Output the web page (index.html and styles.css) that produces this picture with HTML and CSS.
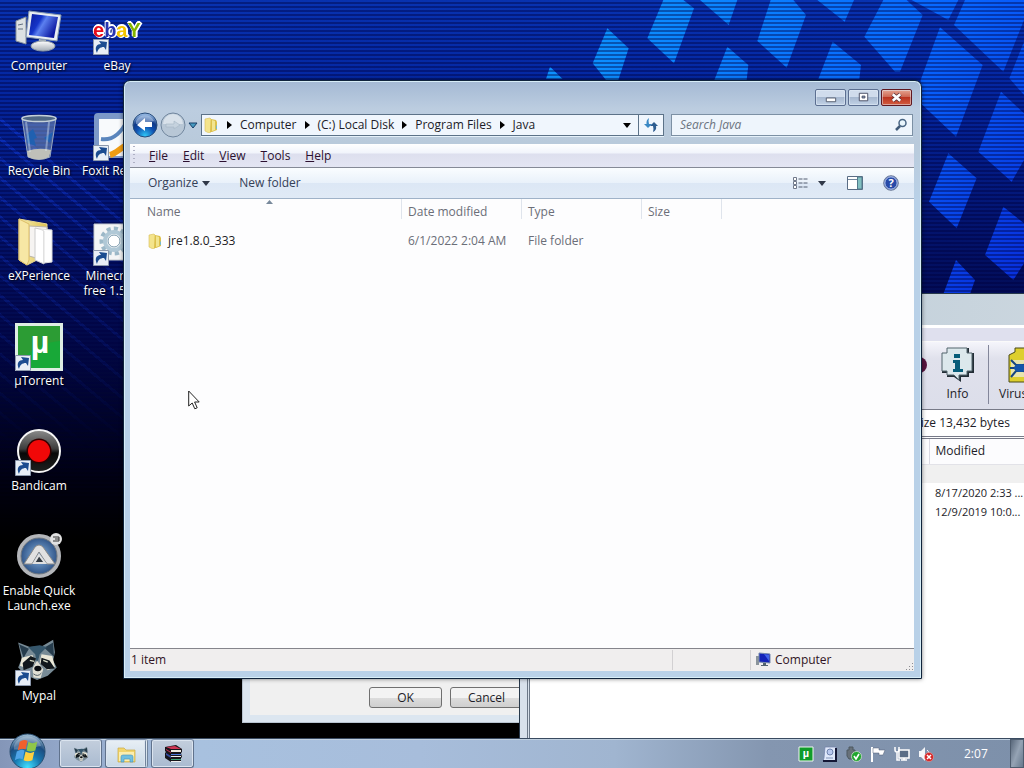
FILE: index.html
```html
<!DOCTYPE html>
<html lang="en">
<head>
<meta charset="utf-8">
<meta name="viewport" content="width=device-width, initial-scale=1">
<title>Java</title>
<link rel="stylesheet" href="styles.css">
</head>
<body>
<svg class="defs" width="0" height="0" aria-hidden="true">
  <defs>
    <linearGradient id="screen" x1="0" y1="0" x2="1" y2=".5"><stop offset="0" stop-color="#0c1c98"/><stop offset=".4" stop-color="#1434c8"/><stop offset=".55" stop-color="#5c80f0"/><stop offset="1" stop-color="#0c18a0"/></linearGradient>
    <linearGradient id="gold" x1="0" x2="1"><stop offset="0" stop-color="#f8efb0"/><stop offset="1" stop-color="#dcc050"/></linearGradient>
    <linearGradient id="silver" x1="0" y1="0" x2="0" y2="1"><stop offset="0" stop-color="#fff"/><stop offset="1" stop-color="#a4adb6"/></linearGradient>
    <linearGradient id="ring" x1="0" y1="0" x2="0" y2="1"><stop offset="0" stop-color="#8c8c8c"/><stop offset=".45" stop-color="#3c3c3c"/><stop offset=".55" stop-color="#080808"/><stop offset="1" stop-color="#202020"/></linearGradient>
    <radialGradient id="autoblue"><stop offset="0" stop-color="#88b4e0"/><stop offset="1" stop-color="#284c80"/></radialGradient>
    <radialGradient id="navblue" cx=".5" cy=".95" r=".9"><stop offset="0" stop-color="#30c8f8"/><stop offset=".45" stop-color="#1050b0"/><stop offset=".7" stop-color="#103a88"/><stop offset="1" stop-color="#90b4e0"/></radialGradient>
    <radialGradient id="orb" cx=".5" cy=".95" r=".95"><stop offset="0" stop-color="#40e0ff"/><stop offset=".4" stop-color="#1878b0"/><stop offset=".7" stop-color="#1c4c80"/><stop offset="1" stop-color="#a8c4d8"/></radialGradient>
    <symbol id="shortcut" viewBox="0 0 16 16"><path d="M.5.5h15v15H.5z" fill="#e8eef6" stroke="#8c98ac"/><path d="M4 14C1 8 4 5 8 5L6 2l8 1-1 8-2-3c-4 0-6 2-7 6z" fill="#1c4c90"/></symbol>
    <symbol id="folder" viewBox="0 0 16 16"><path d="M2 2l5-1 1 1v13l-2 1-4-2z" fill="#f4e48c" stroke="#d8bd58" stroke-width=".6"/><path d="M8 2l5 1 1 2v8l-5 2H7z" fill="#dcc04c"/><path d="M9 3l3 1v9l-3 1z" fill="#f2e590"/><path d="M13 8l1 1v3h-1z" fill="#78bac8"/></symbol>
    <symbol id="raccoon" viewBox="0 0 48 48"><path d="M3 5l13 5 14-1L42 2l2 14-2 9 4 8-10 9-12 5-13-6L3 33l4-10z" fill="#788b96"/><path d="M4 7l11 5-6 10zM42 5l1 16-11-10z" fill="#263c4c"/><path d="M14 10l8 8 2 12 3-12 8-8-8-2z" fill="#35566b"/><path d="M7 22l12-3 3 9-9 6-8-3zM29 18l12 2 3 12-8 4-9-8z" fill="#ebe8d8"/><path d="M8 28l9-8 6 3-4 9-10 4zM29 22l9 3 6 9-9 1-7-6z" fill="#11171c"/><path d="M16 25l5 1M31 25l5 2" stroke="#d8dcc8" stroke-width="1.5"/><path d="M19 34l5-9 7 10-3 10-8-1z" fill="#e0dfd4"/><ellipse cx="25" cy="34" rx="4" ry="3" fill="#080c10"/><path d="M20 40q5 4 9-1" stroke="#42505a" fill="none"/></symbol>
  </defs>
</svg>
<main class="desktop">
  <svg class="wallpaper" viewBox="0 0 1572 900" aria-hidden="true">
    <defs>
      <linearGradient id="tiles" gradientUnits="userSpaceOnUse" x1="400" y1="0" x2="1500" y2="900"><stop offset="0" stop-color="#0c90ff"/><stop offset=".55" stop-color="#0764ff"/><stop offset="1" stop-color="#0830dc"/></linearGradient>
    </defs>
    <g fill="url(#tiles)">
      <path d="M150 200l38 37h-50zM322 85l64 60-31 95h-37l-40-50zM490 0h60l32 25-60 165-80-75zM600 0h112l-26 75zM812 0h68l38 45-58 158-88-80zM682 140l63 55-5 45h-97zM952 0h110l-28 65zM1150 0h70l48 45-68 170h-15l-92-105zM998 125l85 70-5 42H955zM1235 0h140l-30 60z"/>
      <path d="M1395 0h177v60l-62 155-148-140zM1320 82l128 113-80 215-106-100v-70zM1572 125v160l-44-50zM1503 275l69 65v140l-37 65-100-90zM1345 460l85 75-60 150-83-80zM1510 620l62 50v120l-32 50-85-75zM1368 780l57 60-15 42h-80z"/>
    </g>
  </svg>
  <div class="weave"></div>
  <div class="scanlines"></div>

  <nav class="icons" aria-label="Desktop">
    <div class="icon-column">
      <a class="icon" href="#computer"><svg viewBox="0 0 48 48"><path d="M1 13l10-4v27l-10-3z" fill="#dce1e3" stroke="#88939b"/><path d="M3 17l5-1M3 21h5" stroke="#627080"/><path d="M14 3l32 4-4 26-31-4z" fill="#e9eef3" stroke="#899bb1"/><path d="M17 6l26 3-4 21-25-3z" fill="url(#screen)"/><path d="M24 31l7 1 1 6h-9z" fill="#aeb8be"/><ellipse cx="28" cy="38" rx="12" ry="5" fill="url(#silver)" stroke="#929fa9"/></svg><span>Computer</span></a>
      <a class="icon" href="#recycle"><svg viewBox="0 0 48 48"><path d="M7 5h34l-6 39q-11 5-22 0z" fill="#7c98c0" fill-opacity=".55" stroke="#98a8c0"/><path d="M12 38l1 6q11 5 21 0l2-7q-12-3-24 1z" fill="#bfc0b9"/><ellipse cx="24" cy="5.500" rx="17" ry="3" fill="#506884" stroke="#c4d0d8" stroke-width="1.500"/><path d="M12 21l6-5 4 9-3 1 2 7-9-3M29 25l9-6-3 11z" fill="#2060b0"/><path d="M11 9l4 30M34 9l-3 29" stroke="#e0edf5" opacity=".4" stroke-width="2"/></svg><span>Recycle Bin</span></a>
      <a class="icon" href="#experience"><svg viewBox="0 0 48 48"><path d="M4 1l28 5v31L12 47l-8-5z" fill="url(#gold)" stroke="#ead890"/><path d="M14 8l18 1v34l-18-5z" fill="#f6f4f2" stroke="#bbb5a8"/><path d="M20 10l9 2v34l-9-4z" fill="#fff" stroke="#ccc"/><path d="M25 11l12 1v32l-8 1V13z" fill="#fefefe" stroke="#ddd"/><path d="M4 1l10 5v36l-2 5-8-5z" fill="#f7e7a5" stroke="#ddbd68"/></svg><span>eXPerience</span></a>
      <a class="icon" href="#utorrent"><svg viewBox="0 0 48 48"><path d="M0 0h48v48H0z" fill="#dfeee4"/><path d="M3 3h42v42H3z" fill="#18a838"/><path d="M3 3h42v15C22 20 8 32 3 45z" fill="#2c9c34"/><text x="25" y="30" text-anchor="middle" class="mu">µ</text><use href="#shortcut" y="32" width="16" height="16"/></svg><span>µTorrent</span></a>
      <a class="icon" href="#bandicam"><svg viewBox="0 0 48 48"><circle cx="24" cy="23" r="21" fill="url(#ring)" stroke="#f5f5f5" stroke-width="2"/><circle cx="24" cy="23" r="12.500" fill="#300"/><circle cx="24" cy="23" r="11" fill="#f10808"/><use href="#shortcut" y="32" width="16" height="16"/></svg><span>Bandicam</span></a>
      <a class="icon" href="#quicklaunch"><svg viewBox="0 0 48 48"><circle cx="24" cy="23" r="20" fill="url(#autoblue)" stroke="#b4b6ba" stroke-width="4"/><circle cx="24" cy="23" r="18" fill="none" stroke="#707880"/><path d="M9 31l11-17q4-4 8 0l12 17h-8l-8-12-7 12z" fill="#e1e1e1" stroke="#888"/><path d="M19 30l5-8 6 8z" fill="#303840" stroke="#e1e1e1" stroke-width="2"/><circle cx="41" cy="6" r="6" fill="#e2e2e2"/><path d="M38 4h6v4h-6M40 6h4" fill="none" stroke="#333"/></svg><span>Enable Quick Launch.exe</span></a>
      <a class="icon" href="#mypal"><svg viewBox="0 0 48 48"><use href="#raccoon" width="44" height="43"/><use href="#shortcut" y="32" width="16" height="16"/></svg><span>Mypal</span></a>
    </div>
    <div class="icon-column">
      <a class="icon" href="#ebay"><svg viewBox="0 0 48 48"><text x="0" y="29" class="logo"><tspan fill="#e80c18">e</tspan><tspan fill="#2834b0">b</tspan><tspan fill="#f4c400">a</tspan><tspan fill="#82b500">Y</tspan></text><use href="#shortcut" y="31" width="16" height="16"/></svg><span>eBay</span></a>
      <a class="icon" href="#foxit"><svg viewBox="0 0 48 48"><rect x="1" width="46" height="45" rx="4" fill="#7c98c8"/><path d="M6 6h41v37H6z" fill="#f8fafc"/><path d="M8 26c13 2 22-9 27-20" stroke="#5b86bd" stroke-width="4" fill="none"/><path d="M17 42c8-2 14-12 26-13" stroke="#ef9c13" stroke-width="6" fill="none"/><use href="#shortcut" y="32" width="16" height="16"/></svg><span>Foxit Reader</span></a>
      <a class="icon" href="#minecraft"><svg viewBox="0 0 48 48"><path d="M1 6h46v36H1z" fill="#f4f5f6" stroke="#c4c9cf"/><circle cx="21" cy="23" r="12" fill="none" stroke="#9cb8c8" stroke-width="5" stroke-dasharray="4 3"/><circle cx="21" cy="23" r="9" fill="#fff" stroke="#b0c8d6" stroke-width="4"/><circle cx="21" cy="23" r="6" fill="none" stroke="#7898ac"/><use href="#shortcut" y="32" width="16" height="16"/></svg><span>Minecraft... free 1.5.2_...</span></a>
    </div>
  </nav>

  <section class="dialog" aria-label="Options">
    <div class="dialog-body"><button type="button">OK</button><button type="button">Cancel</button></div>
  </section>

  <section class="archive" aria-label="Archive">
    <div class="archive-frame"></div>
    <div class="archive-main">
      <div class="archive-title"></div>
      <div class="archive-menu"></div>
      <div class="archive-tools">
        <button type="button" class="wizard" aria-label="Wizard"><svg viewBox="0 0 36 36"><circle cx="28" cy="18" r="8" fill="#58153f"/></svg></button>
        <button type="button" class="info"><svg viewBox="0 0 36 36"><path d="M7 1h22v5h5v20h-5v4h-8v5l-7-5H7v-4H2V6h5z" fill="#222d35"/><path d="M7 1h20v5h5v18h-5v4h-8v5l-5-5H7v-4H2V6h5z" fill="#dce8ec" stroke="#53646d"/><path d="M14 7h6v4h-6zM13 13h7v9h3v3H13v-3h2v-6h-2z" fill="#075d79"/></svg><span>Info</span></button>
        <button type="button" class="virus"><svg viewBox="0 0 36 36"><path d="M8 1h10v4l6 3v27H2V8l6-3z" fill="#ddcf2e" stroke="#4b4a17"/><path d="M4 13h18v17H4z" fill="#e8e5ae"/><path d="M4 13l5 5h8l5-5M3 21h20M4 30l5-6h8l5 6" fill="none" stroke="#174780" stroke-width="2"/><ellipse cx="13" cy="21" rx="6" ry="4" fill="#1455aa"/></svg><span>Virus</span></button>
      </div>
      <div class="archive-path">size 13,432 bytes</div>
      <table class="archive-list">
        <colgroup><col class="hidden-name"><col></colgroup>
        <thead><tr><th></th><th>Modified</th></tr></thead>
        <tbody><tr class="parent"><td></td><td></td></tr><tr><td></td><td>8/17/2020 2:33 ...</td></tr><tr><td></td><td>12/9/2019 10:0...</td></tr></tbody>
      </table>
    </div>
  </section>

  <section class="explorer" aria-label="Java">
    <header class="caption">
      <button type="button" aria-label="Minimize"><svg viewBox="0 0 30 16"><path d="M10.500 8.500h10v4h-10z" fill="#fff" stroke="#515a6c"/></svg></button>
      <button type="button" aria-label="Maximize"><svg viewBox="0 0 30 16"><path d="M10.500 3.500h9v8h-9z" fill="#fff" stroke="#464c62"/><path d="M13.500 6.500h3v2h-3z" fill="#92a7c4" stroke="#464c62"/></svg></button>
      <button type="button" class="close" aria-label="Close"><svg viewBox="0 0 30 16"><path d="M11 4.500l8 7m0-7l-8 7" stroke="#583036" stroke-width="4.500"/><path d="M11 4.500l8 7m0-7l-8 7" stroke="#fff" stroke-width="2.800"/></svg></button>
    </header>
    <div class="location">
      <div class="travel">
        <button type="button" aria-label="Back"><svg viewBox="0 0 26 26"><circle cx="13" cy="13" r="12" fill="url(#navblue)" stroke="#284c7b"/><path d="M4 9a10 10 0 0118 0q-9 3-18 3z" fill="#d5e6fa" opacity=".45"/><path d="M5 13l8-7v4h7v5h-7v4z" fill="#fff"/></svg></button>
        <button type="button" aria-label="Forward"><svg viewBox="0 0 26 26"><circle cx="13" cy="13" r="12" fill="#b8c7d6" stroke="#71869e"/><path d="M3 12a10 10 0 0120 0z" fill="#d8e1ea"/><path d="M6 12h8v-3l6 4-6 4v-2H6z" fill="#c5d2de" stroke="#a5b5c5" stroke-width=".6"/></svg></button>
        <button type="button" class="recent" aria-label="Recent pages"><svg viewBox="0 0 10 7"><path d="M1 1h8L5 6z" fill="#459ac0" stroke="#183f69"/></svg></button>
      </div>
      <div class="address">
        <nav class="crumbs" aria-label="Address">
          <svg class="small-icon"><use href="#folder"/></svg><i></i><a href="#computer">Computer</a><i></i><a href="#c">(C:) Local Disk</a><i></i><a href="#programs">Program Files</a><i></i><a href="#java">Java</a>
        </nav>
        <button type="button" class="history" aria-label="Previous locations"><svg viewBox="0 0 8 5"><path d="M0 0h8L4 5z"/></svg></button>
        <button type="button" class="refresh" aria-label="Refresh"><svg viewBox="0 0 16 16"><path d="M6 1Q3 3 3.500 7H1l4 4 4-4H6Q5 4 6 1z" fill="#3a88c4"/><path d="M10 15q4-2 3-6h2l-4-4-4 4h3q1 3 0 6z" fill="#2c5c90"/></svg></button>
      </div>
      <label class="search"><input type="search" placeholder="Search Java" aria-label="Search Java"><svg viewBox="0 0 14 14"><circle cx="8.500" cy="5" r="3.500" fill="#e8f5fc" stroke="#486583" stroke-width="1.500"/><path d="M6 8l-4 4" stroke="#405a78" stroke-width="2.500"/></svg></label>
    </div>
    <div class="client">
      <nav class="menubar" aria-label="Menu"><button type="button"><u>F</u>ile</button><button type="button"><u>E</u>dit</button><button type="button"><u>V</u>iew</button><button type="button"><u>T</u>ools</button><button type="button"><u>H</u>elp</button></nav>
      <div class="toolbar">
        <button type="button">Organize <svg class="caret" viewBox="0 0 8 5"><path d="M0 0h8L4 5z" fill="#303848"/></svg></button>
        <button type="button">New folder</button>
        <div class="view-tools">
          <button type="button" aria-label="Change view"><svg class="small-icon" viewBox="0 0 16 16"><path d="M1.500 2.500h3v3h-3zM1.500 6.500h3v3h-3zM1.500 10.500h3v3h-3z" fill="#fff" stroke="#70798a"/><path d="M6.500 4h4M11.500 4h4M6.500 8h4M11.500 8h4M6.500 12h4M11.500 12h4" stroke="#535c70"/></svg></button>
          <button type="button" aria-label="More views"><svg class="caret" viewBox="0 0 8 5"><path d="M0 0h8L4 5z" fill="#303848"/></svg></button>
          <button type="button" class="preview" aria-label="Show the preview pane"><svg class="small-icon" viewBox="0 0 16 16"><path d="M.5 1.500h15v13H.5z" fill="#fff" stroke="#596c84"/><path d="M1 4.500h9" stroke="#71869d"/><path d="M10.500 2h4.500v12h-4.500z" fill="#82c0c1" stroke="#52798b"/></svg></button>
          <button type="button" aria-label="Get help"><svg class="small-icon" viewBox="0 0 16 16"><circle cx="8" cy="8" r="7.300" fill="#284aa8" stroke="#75829b"/><circle cx="8" cy="8" r="6.200" fill="none" stroke="#c6d6f5"/><text x="8" y="12" text-anchor="middle" class="help-mark">?</text></svg></button>
        </div>
      </div>
      <div class="files">
        <table>
          <colgroup><col class="col-name"><col class="col-mid"><col class="col-mid"><col class="col-size"><col></colgroup>
          <thead><tr><th class="sorted">Name<svg viewBox="0 0 7 4" aria-hidden="true"><path d="M0 4l3.500-4L7 4z" fill="#78899b"/></svg></th><th>Date modified</th><th>Type</th><th>Size</th><th></th></tr></thead>
          <tbody><tr><td><span class="file-name"><svg class="small-icon"><use href="#folder"/></svg>jre1.8.0_333</span></td><td>6/1/2022 2:04 AM</td><td>File folder</td><td></td><td></td></tr></tbody>
        </table>
      </div>
      <footer class="status"><span class="count">1 item</span><span class="blank"></span><span class="zone"><svg class="small-icon" viewBox="0 0 16 16"><path d="M1 4h3v9H1z" fill="#8b949b"/><path d="M4 1l11 1v9L4 10z" fill="#1422b8" stroke="#7689ab"/><path d="M9 2l5 1v6z" fill="#4163ea"/><path d="M8 11h3v2h2v1H6v-1h2z" fill="#536370"/></svg>Computer</span><svg class="grip" viewBox="0 0 9 9"><path d="M7 1h1v1H7zM4 4h1v1H4zM7 4h1v1H7zM1 7h1v1H1zM4 7h1v1H4zM7 7h1v1H7z" fill="#8d8d93"/></svg></footer>
    </div>
  </section>

  <svg class="cursor" viewBox="0 0 12 20" aria-hidden="true"><path d="M.7 1v15l3.500-3 2.600 5.800 2.400-1L6.600 12h4.600z" fill="#fff" stroke="#222"/></svg>
</main>

<footer class="taskbar">
  <button type="button" class="start" aria-label="Start"><svg viewBox="0 0 38 38"><circle cx="19" cy="19" r="18" fill="url(#orb)" stroke="#294e70"/><path d="M5 13a15 15 0 0128 0q-14 4-28 4z" fill="#fff" opacity=".25"/><path d="M11 9q4-3 8-1l-2 9q-4-2-8 1z" fill="#f0602c"/><path d="M20 9q4 3 9 0l-2 9q-5 2-9 0z" fill="#8fc749"/><path d="M8 19q5-3 8-1l-2 9q-4-2-8 1z" fill="#4fa4e8"/><path d="M17 19q5 3 9 0l-2 9q-5 2-9 0z" fill="#ffd040"/></svg></button>
  <div class="tasks">
    <button type="button" class="task mypal" aria-label="Mypal"><svg viewBox="0 0 48 48"><use href="#raccoon"/></svg></button>
    <button type="button" class="task active" aria-label="Explorer"><svg viewBox="0 0 20 20"><path d="M2 4h6l2 2h9v12H2z" fill="#f3d66d" stroke="#c9aa46" stroke-width=".7"/><path d="M3 8h15v9H3z" fill="#fbeeb0"/><path d="M5 18v-5q0-2 2-2h8q2 0 2 2v5h-3v-3H8v3z" fill="#70bfe0" stroke="#4691b8" stroke-width=".6"/></svg></button>
    <button type="button" class="task winrar" aria-label="WinRAR"><svg viewBox="0 0 20 20"><path d="M2 3l11-2 6 4v3l-1 1 1 4-1 1v4H8l-6-4V9l1-1-1-1z" fill="#17151b"/><path d="M3 3l9-1 6 3H8z" fill="#ce3554"/><path d="M8 6h10v2H8z" fill="#eeeae0"/><path d="M3 5l5 3v1L3 6z" fill="#c93153"/><path d="M8 10h10v1H8z" fill="#4774d5"/><path d="M8 12h10v1H8z" fill="#eee"/><path d="M3 9l5 3v2l-5-3z" fill="#354ca0"/><path d="M8 15h10v1H8z" fill="#39a273"/><path d="M8 17h10v1H8z" fill="#eee"/></svg></button>
  </div>
  <div class="tray">
    <svg viewBox="0 0 16 16"><path d="M1 1h14v14H1z" fill="#109c29" stroke="#eef7ef"/><text x="8" y="11" text-anchor="middle" class="mu-small">µ</text></svg>
    <svg viewBox="0 0 16 16"><path d="M3 1h11v14H1l1-3z" fill="#dfe8fa" stroke="#7080a8" stroke-width=".7"/><path d="M14 2v13H1" fill="none" stroke="#141735" stroke-width="2"/><circle cx="8" cy="6" r="3" fill="#b9c9ef" stroke="#6e83ad"/><path d="M4 12h7" stroke="#8094ba"/></svg>
    <svg viewBox="0 0 16 16"><path d="M3 1h4v3h2v9H3L1 10V4h2z" fill="#68717a" stroke="#4d5961"/><circle cx="10.500" cy="10.500" r="5" fill="#20a52e" stroke="#dfe9df" stroke-width=".7"/><path d="M8 10l2 3 3-5" fill="none" stroke="#fff" stroke-width="1.600"/></svg>
    <svg viewBox="0 0 16 16"><path d="M2 1v15" stroke="#fff" stroke-width="2"/><path d="M3 2h6v2h6l-2 5H9V7H3z" fill="#fff" stroke="#505f75" stroke-width=".5"/></svg>
    <svg viewBox="0 0 16 16"><path d="M5 4h10v8H5z" fill="#5a6d86" stroke="#fff" stroke-width="1.500"/><path d="M7 14h6M10 12v2" stroke="#fff" stroke-width="1.500"/><path d="M1 1v3q0 2 2 2t2-2V1M3 6v8h3" fill="none" stroke="#fff" stroke-width="1.500"/></svg>
    <svg viewBox="0 0 16 16"><path d="M1 5h2l4-4v14l-4-4H1z" fill="#f5f6f8"/><path d="M9 4q3 2 1 7" fill="none" stroke="#f0f3f8"/><circle cx="11" cy="11" r="4.500" fill="#d62526" stroke="#f0b2ac" stroke-width=".5"/><path d="M9 9l4 4m0-4l-4 4" stroke="#fff" stroke-width="1.500"/></svg>
  </div>
  <time class="clock">2:07</time>
  <button type="button" class="show-desktop" aria-label="Show desktop"></button>
</footer>
</body>
</html>
```
FILE: styles.css
```css
* { box-sizing: border-box; }
body {
  margin: 0;
  height: 100vh;
  overflow: hidden;
  display: flex;
  flex-direction: column;
  background: #000;
  color: #1c1c28;
  font: 12px/16px "Open Sans", "Noto Sans", sans-serif;
}
button, input { font: inherit; color: inherit; }
button { margin: 0; padding: 0; border: 0; background: none; }
a { color: inherit; text-decoration: none; }
u { text-decoration: underline 1px; text-underline-offset: 1px; }
svg { display: block; flex: none; }
table { border-collapse: collapse; table-layout: fixed; width: 100%; }
th { font-weight: 400; text-align: left; }
th, td { padding: 0; white-space: nowrap; }
.defs { position: absolute; }
.small-icon { width: 16px; height: 16px; }

/* Desktop */
.desktop {
  position: relative;
  flex: 1;
  min-height: 0;
  overflow: hidden;
  background: linear-gradient(#0832b0 0, #0426a0 90px, #031470 220px, #020848 340px, #000010 480px, #000 540px);
}
.wallpaper { position: absolute; top: 0; right: 0; width: 524px; height: 300px; }
.scanlines {
  position: absolute;
  inset: 0;
  background: repeating-linear-gradient(#00003c00 0 2px, #00003c66 2px 4px);
  mask-image: linear-gradient(#000 0, #000 300px, transparent 520px);
}
.weave {
  position: absolute;
  inset: 110px auto auto 0;
  width: 240px;
  height: 340px;
  background: repeating-linear-gradient(40deg, #1440ff00 0 12px, #1848ff60 12px 15px);
  mask-image: linear-gradient(#000, transparent);
  clip-path: polygon(0 0, 100% 50%, 100% 100%, 0 100%);
}
.icons { position: relative; display: flex; padding-top: 8px; }
.icon-column { width: 78px; }
.icon {
  display: flex;
  flex-direction: column;
  align-items: center;
  gap: 2px;
  height: 105px;
  color: #fff;
  line-height: 15px;
  text-align: center;
  text-shadow: 1px 1px 2px #000;
}
.icon svg { width: 48px; height: 48px; overflow: visible; text-shadow: none; }
.logo {
  font: bold 20px "Liberation Sans", sans-serif;
  filter: drop-shadow(1px 1px 0 #fff) drop-shadow(-1px -1px 0 #fff) drop-shadow(1px -1px 0 #fff);
}
.mu { font: bold 32px "Liberation Sans", sans-serif; fill: #fff; }
.mu-small { font: bold 11px "Liberation Sans", sans-serif; fill: #fff; }
.help-mark { font: bold 11px "Open Sans", sans-serif; fill: #fff; }

/* Dialog behind */
.dialog {
  position: absolute;
  left: 242px;
  bottom: 15px;
  width: 300px;
  height: 120px;
  padding: 0 7px 7px;
  border: 1px solid #b8c4d0;
  background: #dce6f0;
}
.dialog-body {
  display: flex;
  align-items: flex-end;
  gap: 8px;
  height: 100%;
  padding: 0 0 7px 119px;
  background: #f0f0f0;
}
.dialog button {
  width: 73px;
  height: 21px;
  border: 1px solid #707070;
  border-radius: 3px;
  background: linear-gradient(#f3f3f3 50%, #dddddd 50%, #cfcfcf);
}

/* Archive window */
.archive {
  position: absolute;
  left: 519px;
  right: -60px;
  top: 293px;
  bottom: 0;
  display: flex;
  border: 1px solid #27384a;
  border-bottom: 0;
  background: #fff;
}
.archive-frame { width: 10px; border-right: 3px double #6c7888; background: #d8e1ec; }
.archive-main { flex: 1; min-width: 0; }
.archive-title { height: 31px; background: linear-gradient(90deg, #b9c9d6, #ccd7df); }
.archive-menu { height: 16px; border-top: 3px solid #fff; background: #dfe0ee; }
.archive-tools {
  display: flex;
  height: 69px;
  padding: 3px 0 5px 372px;
  border-top: 1px solid #fafafa;
  border-bottom: 1px solid #777a88;
  background: linear-gradient(#f5f5fb, #e0e1ec 25%, #dcdeea);
}
.archive-tools button { display: flex; flex-direction: column; align-items: center; gap: 3px; padding-top: 2px; }
.archive-tools svg { width: 36px; height: 36px; }
.archive-tools .wizard { width: 25px; align-items: flex-end; }
.archive-tools .info { width: 62px; border-right: 1px solid #83869a; }
.archive-tools .virus { align-items: flex-start; padding-left: 10px; }
.archive-tools .virus svg { margin-left: 8px; }
.archive-path { height: 29px; padding: 4px 0 4px 385px; border-bottom: 3px double #777a88; line-height: 17px; }
.archive-list .hidden-name { width: 399px; }
.archive-list th { height: 25px; padding-left: 6px; border-right: 1px solid #d9d9e2; border-bottom: 1px solid #e2e2e8; background: #fcfcfe; }
.archive-list td { height: 19px; padding-left: 6px; font-size: 11px; }
.archive-list .parent { background: #f0f0f0; }
.archive-list td:first-child { background: linear-gradient(90deg, #f6f6f6 120px, transparent 120px); }

/* Explorer window */
.explorer {
  position: absolute;
  left: 123px;
  right: 102px;
  top: 80px;
  bottom: 59px;
  display: flex;
  flex-direction: column;
  padding: 0 7px 7px 6px;
  border: 1px solid #10243c;
  border-radius: 7px 7px 0 0;
  background: linear-gradient(#a4b9d4, #bccde0 28px, #b9cadb 62px, #b9d1e8 120px);
  box-shadow: inset 0 0 0 1px #d8eef8, 0 0 4px #00000080;
}
.caption { display: flex; justify-content: flex-end; gap: 2px; padding: 8px 2px 0 0; }
.caption button {
  width: 31px;
  height: 17px;
  border: 1px solid #5c6f91;
  border-radius: 2px;
  background: linear-gradient(#d0dcec 45%, #a4b6ce 45%, #c2d2e6);
  box-shadow: inset 0 0 0 1px #e4edf780;
}
.caption svg { width: 29px; height: 15px; }
.caption .close { border-color: #601820; background: linear-gradient(#e5a491, #cf6853 45%, #b9301c 45%, #d45d40); }
.location { display: flex; align-items: center; gap: 7px; height: 38px; padding: 0 1px 0 2px; }
.travel { display: flex; align-items: center; gap: 2px; margin-right: -4px; }
.travel svg { width: 26px; height: 26px; }
.travel .recent svg { width: 10px; height: 7px; }
.address { flex: 1; display: flex; height: 22px; border: 1px solid #5c7288; background: #f0f6fd; }
.address, .search { box-shadow: 0 1px 0 #e5f1fa; }
.crumbs { flex: 1; min-width: 0; display: flex; align-items: center; gap: 8px; padding-left: 1px; white-space: nowrap; }
.crumbs i { border: 4px solid transparent; border-left: 5px solid #000; border-right: 0; }
.history { width: 22px; display: grid; place-items: center; }
.history svg { width: 8px; height: 5px; }
.refresh { width: 25px; border-left: 1px solid #5c7288; display: grid; place-items: center; }
.refresh svg { width: 16px; height: 16px; }
.search {
  display: flex;
  align-items: center;
  width: 31%;
  height: 22px;
  padding: 0 4px 0 8px;
  border: 1px solid #7c90a4;
  background: #eef5fc;
}
.search input { flex: 1; min-width: 0; padding: 0; border: 0; outline: 0; background: none; }
.search input::placeholder { color: #6c7480; font-style: italic; opacity: 1; }
.search svg { width: 14px; height: 14px; }
.client { flex: 1; min-height: 0; display: flex; flex-direction: column; background: #fdfdfe; }
.menubar {
  display: flex;
  gap: 15px;
  height: 24px;
  padding-left: 19px;
  border-bottom: 1px solid #858a96;
  background:
    repeating-linear-gradient(#aeb0c4 0 1px, transparent 1px 4px) 3px 2px / 2px 18px no-repeat,
    linear-gradient(#fff, #f1f4fb 9px, #dddfee 10px, #e4e6f3);
  color: #2c1030;
}
.toolbar {
  display: flex;
  align-items: center;
  gap: 29px;
  height: 31px;
  padding: 0 15px 0 18px;
  border-bottom: 1px solid #9fb2c8;
  background: linear-gradient(#fafdff, #e9f1fa 50%, #dce7f5 50%, #e0eaf6);
  color: #344058;
}
.toolbar button { display: flex; align-items: center; gap: 4px; }
.caret { width: 8px; height: 5px; }
.view-tools { display: flex; align-items: center; gap: 10px; margin-left: auto; }
.view-tools .preview { margin: 0 10px 0 11px; }
.files { flex: 1; min-height: 0; color: #6b6e78; }
.files .col-name { width: 272px; }
.files .col-mid { width: 120px; }
.files .col-size { width: 80px; }
.files th { height: 32px; padding: 0 6px 6px; background: linear-gradient(#dfe4ec, #dfe4ec) right top / 1px 20px no-repeat; }
.files th:last-child { background: none; }
.files .sorted { position: relative; }
.files .sorted svg { position: absolute; top: 1px; left: 50%; width: 7px; height: 4px; }
.files td { height: 20px; padding: 0 6px; }
.files th:first-child, .files td:first-child { padding-left: 17px; }
.file-name { display: flex; align-items: center; gap: 5px; color: #1c1c24; }
.status { display: flex; align-items: center; height: 23px; border-top: 1px solid #85858c; background: #f0eeee; color: #301424; }
.status > span { height: 20px; line-height: 20px; border-right: 1px solid #d2d0d2; }
.status .count { flex: 1; padding-left: 1px; }
.status .blank { width: 78px; }
.status .zone { width: 154px; display: flex; align-items: center; gap: 4px; padding-left: 4px; border: 0; }
.grip { width: 9px; height: 9px; align-self: flex-end; }
.cursor { position: absolute; left: 188px; top: 390px; width: 12px; height: 20px; }

/* Taskbar */
.taskbar {
  position: relative;
  display: flex;
  align-items: stretch;
  height: 30px;
  border-top: 1px solid #394a60;
  background: linear-gradient(90deg, #8496b8, #92a6c8 60px, #a8c1df 200px, #a7bddb 420px, #a0b5d0 60%, #8496b0 75%, #7d90aa);
  box-shadow: inset 0 1px 0 #c0d0e0;
}
.start { width: 54px; display: flex; align-items: flex-end; justify-content: center; }
.start svg { width: 37px; height: 37px; margin-bottom: -2px; }
.tasks { display: flex; flex: 1; gap: 3px; padding-left: 5px; }
.task {
  width: 43px;
  display: grid;
  place-items: center;
  border: 1px solid #60728c;
  border-top-color: #7b8da6;
  border-radius: 3px;
  background: linear-gradient(#c3cedd, #aabbd0);
  box-shadow: inset 0 0 0 1px #dbe4ef;
}
.task svg { width: 20px; height: 20px; }
.task.mypal svg { width: 16px; height: 16px; }
.task.active { background: linear-gradient(#e8eff5, #c8d8e6); border-right: 3px double #71849c; }
.tray { display: flex; align-items: center; gap: 8px; padding-right: 30px; }
.tray svg { width: 16px; height: 16px; }
.clock { align-self: center; width: 46px; color: #fff; }
.show-desktop { width: 14px; border: 1px solid #4e5c6e; background: linear-gradient(110deg, #58677a, #95a3b4 50%, #66788c); }
```
